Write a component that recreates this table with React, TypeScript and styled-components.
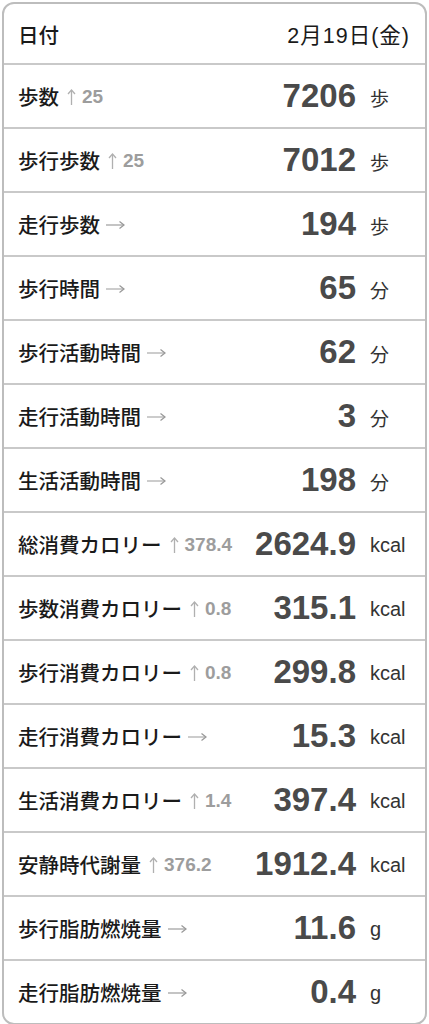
import React from 'react';
import styled, { createGlobalStyle } from 'styled-components';

const GlobalStyle = createGlobalStyle`
  html, body {
    margin: 0;
    padding: 0;
    background: #ffffff;
    overflow: hidden;
  }
  body {
    font-family: "Liberation Sans", "Noto Sans CJK JP", sans-serif;
  }
`;

const Table = styled.div`
  margin: 2px 2px 0 2px;
  border: 2px solid #bdbdbd;
  border-radius: 12px;
  background: #fff;
  overflow: hidden;
`;

const Row = styled.div<{ $header?: boolean }>`
  display: grid;
  grid-template-columns: 1fr auto 55px;
  align-items: center;
  height: ${({ $header }) => ($header ? '59px' : '62px')};
  border-top: ${({ $header }) => ($header ? 'none' : '2px solid #c9c9c9')};
  padding-left: 14px;
`;

const HeaderRow = styled(Row)`
  grid-template-columns: 1fr auto;
  padding-right: 15px;
`;

const LabelCell = styled.div`
  display: flex;
  align-items: center;
  font-size: 20.5px;
  font-weight: 500;
  color: #1a1a1a;
  white-space: nowrap;
`;

const DateText = styled.div`
  font-size: 21.5px;
  letter-spacing: 1px;
  color: #1a1a1a;
`;

const Trend = styled.span<{ $flat?: boolean }>`
  display: inline-flex;
  align-items: center;
  margin-left: ${({ $flat }) => ($flat ? '5px' : '8px')};
  padding-top: 2px;
  gap: 6px;
`;

const Diff = styled.span`
  font-size: 19px;
  font-weight: bold;
  color: #9d9d9d;
`;

const Value = styled.div`
  font-size: 33px;
  font-weight: bold;
  color: #4a4a4a;
  text-align: right;
  padding-right: 14px;
`;

const Unit = styled.div<{ $latin?: boolean }>`
  font-size: ${({ $latin }) => ($latin ? '20px' : '19px')};
  color: #333;
  padding-top: 3px;
`;

const UpArrow = () => (
  <svg width="9" height="18" viewBox="0 0 9 18">
    <line x1="4.5" y1="2" x2="4.5" y2="17" stroke="#b0b0b0" strokeWidth="1.3" />
    <polyline points="1,6 4.5,2 8,6" fill="none" stroke="#b0b0b0" strokeWidth="1.3" />
  </svg>
);

const RightArrow = () => (
  <svg width="20" height="10" viewBox="0 0 20 10">
    <line x1="1" y1="5" x2="19" y2="5" stroke="#b0b0b0" strokeWidth="1.3" />
    <polyline points="14.5,1.5 19,5 14.5,8.5" fill="none" stroke="#999" strokeWidth="1.3" />
  </svg>
);

interface Item {
  label: string;
  diff?: string;
  value: string;
  unit: string;
}

const items: Item[] = [
  { label: '歩数', diff: '25', value: '7206', unit: '歩' },
  { label: '歩行歩数', diff: '25', value: '7012', unit: '歩' },
  { label: '走行歩数', value: '194', unit: '歩' },
  { label: '歩行時間', value: '65', unit: '分' },
  { label: '歩行活動時間', value: '62', unit: '分' },
  { label: '走行活動時間', value: '3', unit: '分' },
  { label: '生活活動時間', value: '198', unit: '分' },
  { label: '総消費カロリー', diff: '378.4', value: '2624.9', unit: 'kcal' },
  { label: '歩数消費カロリー', diff: '0.8', value: '315.1', unit: 'kcal' },
  { label: '歩行消費カロリー', diff: '0.8', value: '299.8', unit: 'kcal' },
  { label: '走行消費カロリー', value: '15.3', unit: 'kcal' },
  { label: '生活消費カロリー', diff: '1.4', value: '397.4', unit: 'kcal' },
  { label: '安静時代謝量', diff: '376.2', value: '1912.4', unit: 'kcal' },
  { label: '歩行脂肪燃焼量', value: '11.6', unit: 'g' },
  { label: '走行脂肪燃焼量', value: '0.4', unit: 'g' },
];

export default function App() {
  return (
    <>
      <GlobalStyle />
      <Table>
        <HeaderRow $header>
          <LabelCell>日付</LabelCell>
          <DateText>2月19日(金)</DateText>
        </HeaderRow>
        {items.map((item) => (
          <Row key={item.label}>
            <LabelCell>
              {item.label}
              {item.diff ? (
                <Trend>
                  <UpArrow />
                  <Diff>{item.diff}</Diff>
                </Trend>
              ) : (
                <Trend $flat>
                  <RightArrow />
                </Trend>
              )}
            </LabelCell>
            <Value>{item.value}</Value>
            <Unit $latin={/[a-z]/.test(item.unit)}>{item.unit}</Unit>
          </Row>
        ))}
      </Table>
    </>
  );
}
